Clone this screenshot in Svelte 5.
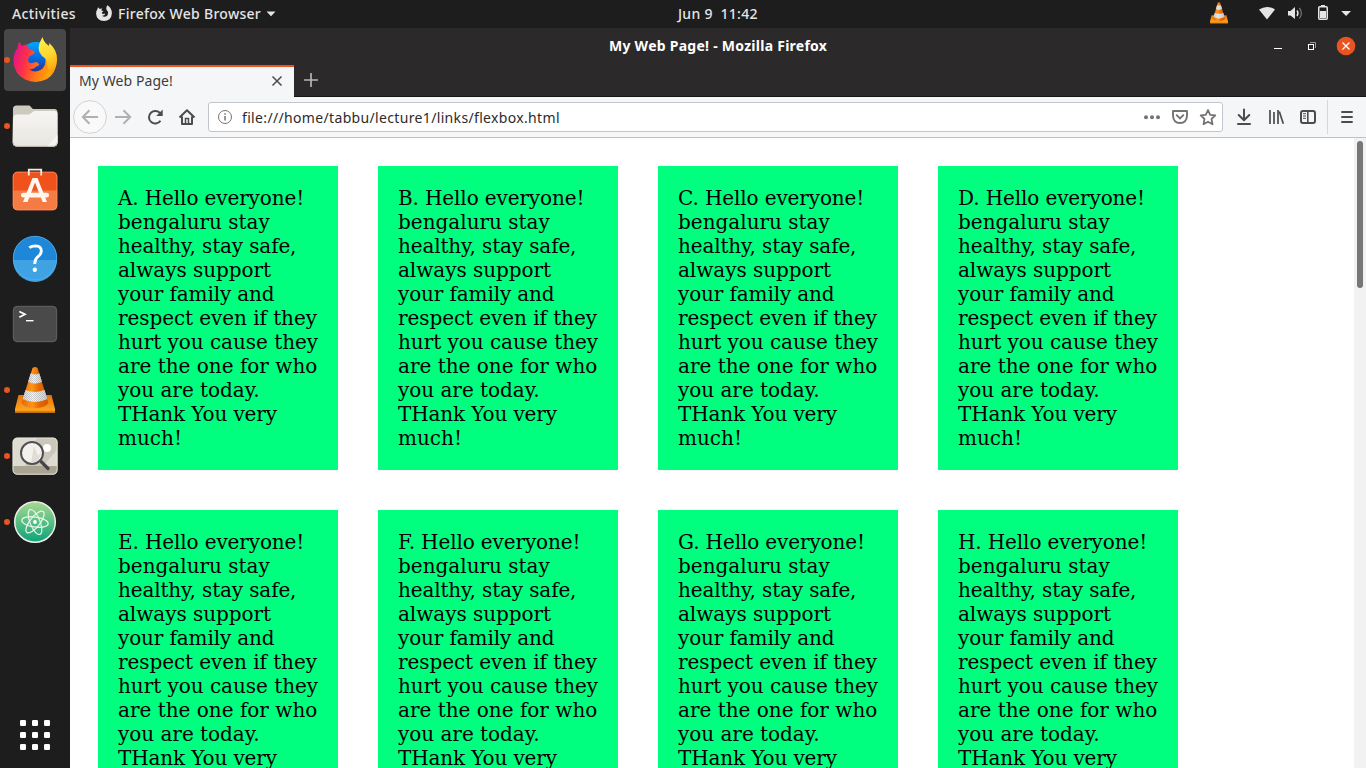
<script>
  const letters = ['A', 'B', 'C', 'D', 'E', 'F', 'G', 'H'];
  const lines = [
    { text: 'bengaluru stay', spacing: 0 },
    { text: 'healthy, stay safe,', spacing: -0.14 },
    { text: 'always support', spacing: -0.05 },
    { text: 'your family and', spacing: -0.13 },
    { text: 'respect even if they', spacing: -0.07 },
    { text: 'hurt you cause they', spacing: -0.04 },
    { text: 'are the one for who', spacing: 0 },
    { text: 'you are today.', spacing: -0.03 },
    { text: 'THank You very', spacing: -0.14 },
    { text: 'much!', spacing: 0 }
  ];
  const dots = [0, 12, 24];
</script>

{#snippet cone()}
  <path d="M3.500 28 H36.500 L40 42 V45.500 H0 V42 Z" fill="url(#coneBase)" />
  <path d="M0 43.700 H40 V45.500 H0Z" fill="#e87708" />
  <path d="M17.500 1 Q20 -1 22.500 1 L33.500 36 Q30 41 20 41 Q10 41 6.500 36Z" fill="url(#coneBody)" />
  <path d="M15.600 6.500 Q20 8.500 24.400 6.500 L26.900 14.800 Q20 18 13.100 14.800Z" fill="url(#coneWhite)" />
  <path d="M10.500 23 Q20 27 29.500 23 L32.300 32 Q20 38 7.700 32Z" fill="url(#coneWhite)" />
  <path d="M15.600 6.500 Q20 8.500 24.400 6.500 L26.900 14.800 Q20 18 13.100 14.800ZM10.500 23 Q20 27 29.500 23 L32.300 32 Q20 38 7.700 32Z" fill="url(#mesh)" />
{/snippet}

<div class="desktop">
  <svg class="defs" width="0" height="0">
    <defs>
      <pattern id="mesh" width="2" height="2" patternUnits="userSpaceOnUse"><rect width="1" height="1" fill="#aaa" opacity=".6" /><rect x="1" y="1" width="1" height="1" fill="#aaa" opacity=".6" /></pattern>
      <linearGradient id="coneBody"><stop offset="0" stop-color="#e06500" /><stop offset=".38" stop-color="#ff961c" /><stop offset=".65" stop-color="#e56a05" /><stop offset="1" stop-color="#d65600" /></linearGradient>
      <linearGradient id="coneBase" x1="0" x2="0" y1="0" y2="1"><stop offset="0" stop-color="#e87208" /><stop offset="1" stop-color="#ffac24" /></linearGradient>
      <linearGradient id="coneWhite"><stop offset="0" stop-color="#d0d2d3" /><stop offset=".4" stop-color="#fafafa" /><stop offset="1" stop-color="#cbcdce" /></linearGradient>
      <linearGradient id="ffBody" x1="0" x2="1" y1=".4" y2=".65"><stop offset="0" stop-color="#e31587" /><stop offset=".28" stop-color="#ff3145" /><stop offset=".6" stop-color="#ff7a16" /><stop offset="1" stop-color="#ffb700" /></linearGradient>
      <linearGradient id="ffGlobe" x1="0" x2="0" y1="0" y2="1"><stop offset="0" stop-color="#00a8ff" /><stop offset=".5" stop-color="#0867dc" /><stop offset="1" stop-color="#362080" /></linearGradient>
      <linearGradient id="ffTail" x1="0" x2=".2" y1="0" y2="1"><stop offset="0" stop-color="#fff34d" /><stop offset=".55" stop-color="#ffd52d" /><stop offset="1" stop-color="#ff9b08" /></linearGradient>
      <linearGradient id="folder" x1="0" x2="0" y1="0" y2="1"><stop offset="0" stop-color="#f6f5f2" /><stop offset="1" stop-color="#e8e6e1" /></linearGradient>
      <linearGradient id="atom" x1="0" x2="0" y1="0" y2="1"><stop offset="0" stop-color="#a8d990" /><stop offset="1" stop-color="#0ba378" /></linearGradient>
    </defs>
  </svg>

  <header class="topbar">
    <span class="activities">Activities</span>
    <svg class="ffmono" width="18" height="18" viewBox="95 5 18 18">
      <path d="M98 7.300 L99.800 9 Q101 8.300 102.300 8.600 L101.200 10.300 L103.500 11.200 L101.600 12.700 Q102.500 14.800 105.300 13.600 Q104.600 16.200 101.900 15.800 Q104.800 18 107.300 15.400 Q109 12.800 107 10.600 Q105.400 8.400 107.300 5.300 Q112 8 111.900 13.600 Q111.200 21 104 21 Q96.600 20.700 96.100 13.800 Q96 10.800 97.300 9.500Z" fill="#e5e5e5" />
    </svg>
    <span class="appname">Firefox Web Browser</span>
    <svg class="arrow" width="10" height="6" viewBox="0 0 10 6"><path d="M.5.500H9.500L5 5.300Z" fill="#e5e5e5" /></svg>
    <span class="clock">Jun 9&nbsp; 11:42</span>
    <div class="status">
      <svg width="156" height="28" viewBox="1210 0 156 28">
        <g transform="translate(1210 2.300) scale(.45 .46)">{@render cone()}</g>
        <path d="M1259 9.500 Q1267 4.500 1275 9.500 L1267 19.500Z" fill="#e5e5e5" />
        <path d="M1288 11H1290.500L1295 7V19L1290.500 15.500H1288Z" fill="#e5e5e5" />
        <path d="M1297 10.500Q1299 13.200 1297 16" fill="none" stroke="#e5e5e5" stroke-width="1.400" />
        <path d="M1299.300 8Q1303.500 13.200 1299.300 18.500" fill="none" stroke="#777" stroke-width="1.200" />
        <rect x="1318.750" y="6.750" width="8.500" height="12.500" rx="1" fill="none" stroke="#e5e5e5" stroke-width="1.500" />
        <path d="M1321 5H1325V6.500H1321ZM1320 11H1326V18H1320Z" fill="#e5e5e5" />
        <path d="M1341.200 11H1351L1346.100 16Z" fill="#e5e5e5" />
      </svg>
    </div>
  </header>

  <div class="work">
    <nav class="dock">
      <div class="app active run">
        <svg viewBox="4 29 62 62">
          <circle cx="36" cy="59" r="17" fill="url(#ffGlobe)" />
          <path d="M19.500 41.500 L21.800 46 Q25 44 28 45 L28.400 48.500 Q30.500 49 34.800 51.800 L34 53.800 L29 56.500 L28 60 Q29 64.500 34 62.500 Q38 61 39.200 65 Q36.500 66 34.500 68 Q31.500 70.200 28 68.200 Q33.500 73.500 40.500 70 Q47 66 45 57 L49 45 Q57 48 57 60 Q56 73.500 47 79 Q36 84.500 25 79.500 Q13.500 73.500 13.300 60 Q13.800 52 17.600 48 Q17.600 44 19.500 41.500Z" fill="url(#ffBody)" />
          <path d="M42.500 37 Q43.800 42.500 49 46 L49.300 43 Q57 50 56.800 60 Q56.500 70 49 77 Q53 69 48 69 L46 59 Q36 53 39.500 43Z" fill="url(#ffTail)" />
        </svg>
      </div>
      <div class="app run">
        <svg viewBox="4 95 62 62">
          <path d="M13 108 Q13.500 105.500 16 105.500H29.500L33 109H55Q57.500 109.500 57.500 112V142Q57.500 146.500 53 146.500H17Q12.700 146.500 12.700 142Z" fill="#cdc9bd" />
          <path d="M13 118Q13.500 114.500 17 114.500H28.500Q31 114 32 112.500Q33 111 35 111H54Q57.500 111 57.500 114V142Q57.500 146.500 53 146.500H17Q12.700 146.500 12.700 142Z" fill="url(#folder)" />
          <path d="M47 146.500L57.500 135V142Q57.500 146.500 53 146.500Z" fill="#f5f4f0" />
          <path d="M13 142.500Q13.500 146.300 17 146.300H53Q57 146.300 57.300 142.500" fill="none" stroke="#bcb9b0" stroke-width=".8" />
        </svg>
      </div>
      <div class="app">
        <svg viewBox="4 161 62 62">
          <rect x="12.800" y="171.800" width="44.500" height="38.500" rx="4.500" fill="#f1511b" />
          <path d="M13 190.500H57V206Q57 210 53 210H17Q13 210 13 206Z" fill="#f47b43" />
          <rect x="13.200" y="172.200" width="43.700" height="37.700" rx="4.200" fill="none" stroke="#fa9a70" stroke-width=".7" />
          <path d="M28.800 175.500V169.700H41.200V175.500" fill="none" stroke="#fbeadf" stroke-width="1.800" />
          <path d="M32.500 178H37.500L47 202H42.700L35 182.500L27.500 202H23Z" fill="#fff7f0" />
          <rect x="21" y="192.800" width="28" height="4.700" rx="2.300" fill="#fff7f0" />
        </svg>
      </div>
      <div class="app">
        <svg viewBox="4 227 62 62">
          <circle cx="35" cy="258" r="22" fill="#1e87d8" />
          <path d="M13 260H57A22 22 0 0 1 13 260Z" fill="#3fa2e2" />
          <circle cx="35" cy="258" r="21.700" fill="none" stroke="#55afe9" stroke-width=".8" />
          <path d="M29.300 247.800Q31.500 245.800 35.500 245.800Q41.600 246.200 41.300 251.500Q41 254.500 37.500 257Q34.800 259.300 34.700 264" fill="none" stroke="#fff" stroke-width="2.800" />
          <circle cx="34.800" cy="269.700" r="2.200" fill="#fff" />
        </svg>
      </div>
      <div class="app">
        <svg viewBox="4 293 62 62">
          <rect x="13.300" y="306.300" width="43.400" height="35.400" rx="4" fill="#4a4a4a" stroke="#6e6e6e" stroke-width=".8" />
          <path d="M19.300 311.500L25 314.300L19.300 317.200" fill="none" stroke="#fff" stroke-width="1.700" />
          <path d="M26 320.700H33.500" stroke="#fff" stroke-width="1.400" />
        </svg>
      </div>
      <div class="app run">
        <svg viewBox="4 359 62 62"><g transform="translate(15 367)">{@render cone()}</g></svg>
      </div>
      <div class="app run">
        <svg viewBox="4 425 62 62">
          <rect x="12.700" y="437.700" width="44.700" height="36.800" rx="4.500" fill="#dedbd1" />
          <path d="M37 438H53Q57 438 57 442V450L43 466H25Z" fill="#cbc7bb" />
          <path d="M13 466H57V470Q57 474.200 53 474.200H17Q13 474.200 13 470Z" fill="#aaa493" />
          <rect x="13" y="438" width="44.200" height="36.200" rx="4.200" fill="none" stroke="#efede6" stroke-width=".8" />
          <circle cx="47" cy="448" r="4" fill="#fff" />
          <path d="M41 461.500L48 468.500" stroke="#454545" stroke-width="3.200" stroke-linecap="round" />
          <circle cx="32" cy="453" r="11" fill="#f2f1ed" stroke="#505050" stroke-width="2" />
          <path d="M31 463L34 446L38 456L41 452Q40 462 31 463Z" fill="#dedcd5" />
        </svg>
      </div>
      <div class="app run">
        <svg viewBox="4 491 62 62">
          <circle cx="35" cy="522" r="20.300" fill="url(#atom)" stroke="#eeeeec" stroke-width="1.500" />
          <g fill="none" stroke="#e8f7ed" stroke-width="1.200">
            <ellipse cx="35" cy="522" rx="13.300" ry="5" transform="rotate(8 35 522)" />
            <ellipse cx="35" cy="522" rx="13.300" ry="5" transform="rotate(68 35 522)" />
            <ellipse cx="35" cy="522" rx="13.300" ry="5" transform="rotate(128 35 522)" />
          </g>
          <circle cx="35" cy="522" r="1.900" fill="#fff" />
        </svg>
      </div>
      <div class="grid">
        <svg width="30" height="30" viewBox="0 0 30 30">
          {#each dots as y}{#each dots as x}<rect {x} {y} width="6" height="6" rx="1.300" fill="#fff" />{/each}{/each}
        </svg>
      </div>
    </nav>

    <main class="window">
      <div class="titlebar">
        <span class="title">My Web Page! - Mozilla Firefox</span>
        <svg class="controls" width="96" height="37" viewBox="1270 28 96 37">
          <path d="M1274 48.500H1282" stroke="#fff" />
          <rect x="1308.500" y="44.500" width="5" height="5" fill="none" stroke="#fff" />
          <path d="M1310 42.500H1315.500V48" fill="none" stroke="#999" />
          <circle cx="1346" cy="46" r="9.300" fill="#e95420" />
          <path d="M1342.500 42.500L1349.500 49.500M1349.500 42.500L1342.500 49.500" stroke="#fff" stroke-width="1.300" />
        </svg>
      </div>
      <div class="tabs">
        <div class="tab">
          <span class="tabname">My Web Page!</span>
          <svg class="close" width="12" height="12" viewBox="0 0 12 12"><path d="M1.500 1.500L10.500 10.500M10.500 1.500L1.500 10.500" stroke="#4b4b4b" stroke-width="1.500" /></svg>
        </div>
        <svg class="plus" width="14" height="14" viewBox="0 0 14 14"><path d="M7 0V14M0 7H14" stroke="#b5b4b4" stroke-width="1.700" /></svg>
      </div>
      <div class="toolbar">
        <svg width="138" height="40" viewBox="70 97 138 40" fill="none" stroke-width="2">
          <circle cx="90" cy="117" r="16.400" fill="#f9f9fa" stroke="#d3d3d4" stroke-width="1" />
          <path d="M98 117H83M89.500 110.300L82.800 117L89.500 123.700" stroke="#b0b0b1" />
          <path d="M115 117H130M123.500 110.300L130.200 117L123.500 123.700" stroke="#b0b0b1" />
          <path d="M160.300 113.500A6.300 6.300 0 1 0 160.500 120.800" stroke="#4c4c4c" />
          <path d="M162.700 109.500V116H156.200Z" fill="#4c4c4c" />
          <path d="M179.500 117.500L187 110.200L194.500 117.500M182 116.500V124H192V116.500" stroke="#4c4c4c" stroke-linejoin="round" />
          <path d="M185.500 124V118.500H188.500V124" stroke="#4c4c4c" stroke-width="1.500" />
        </svg>
        <div class="url">
          <svg class="info" width="16" height="16" viewBox="0 0 16 16"><circle cx="8" cy="8" r="6.500" fill="none" stroke="#737373" /><path d="M8 7V11.500M8 4.300V5.800" stroke="#737373" stroke-width="1.500" /></svg>
          <span class="address">file:///home/tabbu/lecture1/links/flexbox.html</span>
          <svg class="actions" width="80" height="28" viewBox="1142 103 80 28">
            <g fill="#737373"><circle cx="1146" cy="117.200" r="2" /><circle cx="1152" cy="117.200" r="2" /><circle cx="1158" cy="117.200" r="2" /></g>
            <path d="M1173 111H1187V116Q1186.500 123 1180 123Q1173.500 123 1173 116Z" fill="none" stroke="#737373" stroke-width="1.900" stroke-linejoin="round" />
            <path d="M1176.700 115.200L1180 118.500L1183.300 115.200" fill="none" stroke="#737373" stroke-width="1.900" stroke-linecap="round" />
            <path d="M1208 110L1210.200 114.800L1215.300 115.400L1211.500 119L1212.500 124.300L1208 121.700L1203.500 124.300L1204.500 119L1200.700 115.400L1205.800 114.800Z" fill="none" stroke="#737373" stroke-width="1.800" stroke-linejoin="round" />
          </svg>
        </div>
        <svg width="143" height="40" viewBox="1223 97 143 40" fill="none" stroke="#4c4c4c" stroke-width="2">
          <path d="M1244 109.500V120M1238.700 115L1244 120.300L1249.300 115M1238 124H1250" stroke-linecap="round" stroke-linejoin="round" />
          <path d="M1270 110V124M1274 112V124M1278 110V124" stroke-width="1.700" />
          <path d="M1279.300 111.500L1283.300 123.800" stroke-width="1.700" />
          <rect x="1301" y="111" width="14" height="12" rx="2" />
          <path d="M1307.800 111V123" stroke-width="1.600" />
          <path d="M1303 113.700H1306M1303 116H1306M1303 118.300H1306" stroke-width="1" />
          <path d="M1327.500 100V134" stroke="#d4d7db" stroke-width="1" />
          <path d="M1342 112H1352M1342 117H1352M1342 122H1352" stroke-linecap="round" stroke-width="1.900" />
        </svg>
      </div>
      <div class="page">
        <div class="cards">
          {#each letters as l}
            <p class="card"><span class="greeting">{l}. Hello everyone!</span><br />{#each lines as line}<span style:letter-spacing="{line.spacing}px">{line.text}</span><br />{/each}</p>
          {/each}
        </div>
        <div class="scroll"><div class="thumb"></div></div>
      </div>
    </main>
  </div>
</div>

<style>
  :global(body) { margin: 0; overflow: hidden; }
  .desktop { width: 1366px; height: 768px; overflow: hidden; display: flex; flex-direction: column; background: #1d1d1d; font-family: "Noto Sans", "Open Sans", sans-serif; font-size: 14px; white-space: nowrap; }
  .defs { position: absolute; }
  svg { display: block; flex: none; }
  .topbar { height: 28px; flex: none; display: grid; grid-template-columns: 83px 23px 148px 412px 1fr 156px; align-items: center; color: #e5e5e5; font-weight: 500; padding-left: 12px; box-sizing: border-box; }
  .topbar span { padding-bottom: 2px; }
  .activities { letter-spacing: 0.37px; }
  .appname { letter-spacing: 0.28px; }
  .arrow { justify-self: start; }
  .clock { letter-spacing: 0.28px; }
  .work { flex: 1; display: flex; min-height: 0; }
  .dock { width: 66px; padding: 1px 0 0 4px; flex: none; display: flex; flex-direction: column; gap: 4px; position: relative; }
  .app { width: 62px; height: 62px; flex: none; border-radius: 4px; position: relative; }
  .app svg { width: 62px; height: 62px; }
  .active { background: #474747; }
  .run::before { content: ""; position: absolute; left: 0; top: 28px; width: 6px; height: 6px; border-radius: 50%; background: #e95420; }
  .grid { margin: auto 0 18px 16px; }
  .window { flex: 1; display: flex; flex-direction: column; min-width: 0; background: #2c292a; }
  .titlebar { height: 37px; flex: none; display: flex; align-items: center; justify-content: space-between; color: #fff; }
  .title { font-weight: 700; padding: 0 0 2px 539px; letter-spacing: 0.26px; }
  .tabs { height: 32px; flex: none; display: flex; align-items: center; background: linear-gradient(#2c292a 31px, #171616 31px); }
  .tab { width: 224px; height: 32px; box-sizing: border-box; background: #f5f6f8; border-top: 2px solid #e95420; display: flex; align-items: center; justify-content: space-between; padding: 0 11px 0 9px; color: #3c3c3c; }
  .tabname { padding-bottom: 3px; letter-spacing: 0.08px; }
  .close { margin-bottom: 2px; }
  .plus { margin: 0 0 2px 10px; }
  .toolbar { height: 40px; flex: none; display: flex; align-items: center; background: #f5f6f8; border-bottom: 1px solid #bfc3c9; }
  .url { width: 1015px; height: 30px; box-sizing: border-box; border: 1px solid #c1c5cd; border-radius: 3px; background: #fff; display: flex; align-items: center; color: #2c2c2c; padding-left: 8px; }
  .address { margin-left: 9px; letter-spacing: 0.34px; }
  .actions { margin-left: auto; }
  .page { flex: 1; min-height: 0; background: #fff; display: flex; justify-content: space-between; overflow: hidden; }
  .cards { display: grid; grid-template-columns: repeat(4, 240px); grid-auto-rows: 304px; gap: 40px; padding: 28px; }
  .card { margin: 0; box-sizing: border-box; padding: 20px; background: #00ff7f; color: #000; font-family: "DejaVu Serif", serif; font-size: 20px; line-height: 24px; }
  .greeting { letter-spacing: -0.12px; }
  .scroll { width: 12px; background: #f2f2f2; padding: 3px; box-sizing: border-box; }
  .thumb { width: 6px; height: 147px; border-radius: 3px; background: #777; }
</style>
